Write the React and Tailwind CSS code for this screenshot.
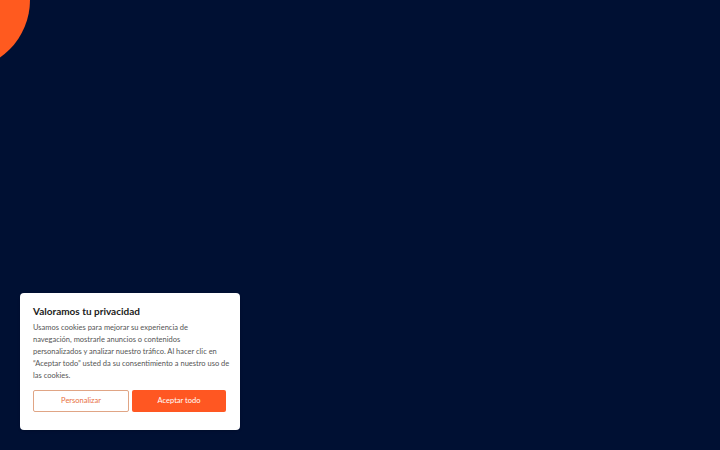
export default function App() {
  return (
    <div className="relative h-[450px] w-[720px] overflow-hidden bg-[#001033] font-['Lato',sans-serif]">
      {/* decorative blob */}
      <svg className="absolute left-0 top-0" width="80" height="80" viewBox="0 0 80 80">
        <circle cx="-40" cy="0" r="70" fill="#ff5a1f" />
      </svg>

      <div className="absolute bottom-[20px] left-[20px] w-[220px] rounded-[4px] bg-white pb-[18px] pl-[13px] pr-[14px] pt-[11px] shadow">
        <h2 className="text-[10px] font-bold leading-[14px] text-[#212121]">
          Valoramos tu privacidad
        </h2>
        <p className="mt-[4px] whitespace-nowrap text-[7.5px] leading-[12px] text-[#555]">
          Usamos cookies para mejorar su experiencia de
          <br />
          navegación, mostrarle anuncios o contenidos
          <br />
          personalizados y analizar nuestro tráfico. Al hacer clic en
          <br />
          “Aceptar todo” usted da su consentimiento a nuestro uso de
          <br />
          las cookies.
        </p>
        <div className="mt-[8px] flex gap-[3px]">
          <button className="h-[22px] flex-1 rounded-[2px] border border-[#e0a585] bg-white text-[7.5px] text-[#e8703f]">
            Personalizar
          </button>
          <button className="h-[22px] flex-1 rounded-[2px] bg-[#ff5722] text-[7.5px] text-white">
            Aceptar todo
          </button>
        </div>
      </div>
    </div>
  );
}
